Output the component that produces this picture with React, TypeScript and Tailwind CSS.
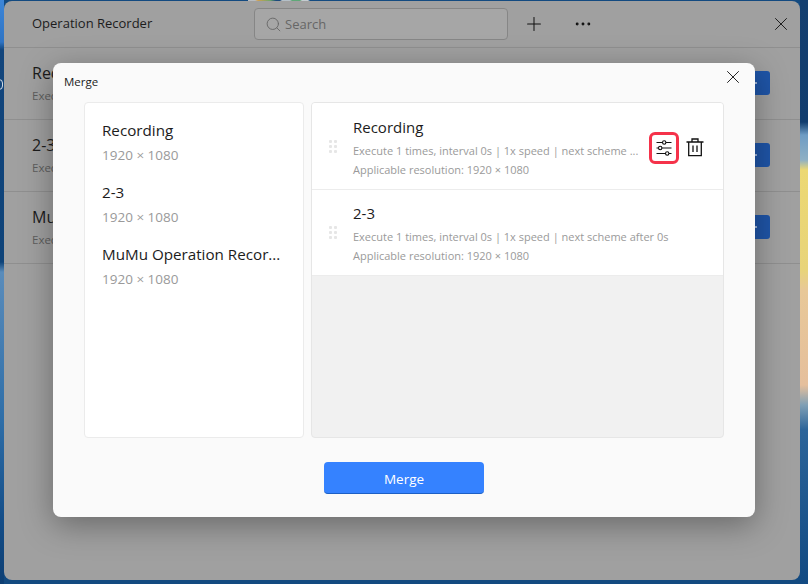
import { MoreHorizontal, Plus, Search, X } from 'lucide-react';

const schemes = [
  { name: 'Recording', top: 'Rec' },
  { name: '2-3', top: '2-3' },
  { name: 'MuMu Operation Recor...', top: 'Mu' }
];

const merged = [
  { name: 'Recording', line: 'Execute 1 times, interval 0s | 1x speed | next scheme ...', tools: true },
  { name: '2-3', line: 'Execute 1 times, interval 0s | 1x speed | next scheme after 0s', tools: false }
];

function Grip() {
  return (
    <div className="grid grid-cols-2 gap-[2px] w-[8px] shrink-0">
      {[0, 1, 2, 3, 4, 5].map((i) => (
        <span key={i} className="w-[3px] h-[3px] rounded-[1px] bg-[#e6e6e6]" />
      ))}
    </div>
  );
}

function SlidersIcon() {
  return (
    <svg width="18" height="18" viewBox="0 0 18 18" fill="none" stroke="#111111" strokeWidth="1.1">
      <path d="M1.5 3.5H7.5M11 3.5H16.5" />
      <circle cx="9.2" cy="3.5" r="1.7" />
      <path d="M1.5 9H3.5M7 9H16.5" />
      <circle cx="5.2" cy="9" r="1.7" />
      <path d="M1.5 14.5H10.5M14 14.5H16.5" />
      <circle cx="12.2" cy="14.5" r="1.7" />
    </svg>
  );
}

function TrashIcon() {
  return (
    <svg className="mb-[2px]" width="18" height="19" viewBox="0 0 18 19" fill="none" stroke="#111111" strokeWidth="1.3">
      <path d="M0.5 4H17.5" />
      <path d="M6 4V1H12V4" />
      <path d="M2.7 4V17.7H15.3V4" />
      <path d="M7 7.5V14M11 7.5V14" />
    </svg>
  );
}

export default function App() {
  return (
    <div className="relative w-[808px] h-[584px] overflow-hidden pl-[4px] pr-[8px] pt-[1px] pb-[4px] font-['Open_Sans',sans-serif] [background:linear-gradient(90deg,transparent_248px,#b8bcc0_248px,#b8bcc0_255px,#d0a050_258px,#6fa86a_270px,#1c4a7c_276px,#1c4a7c_280px,#b5c0c8_282px,#b5c0c8_290px,#5fa878_292px,#5fa878_300px,#c5ccd0_302px,#c5ccd0_308px,transparent_310px)_top/100%_1px_no-repeat,linear-gradient(180deg,#3d86d8_0px,#2f74c4_42px,#12457c_50px,#0e4379_262px,#5a8cbb_272px,#2e6ea8_420px,#134d88_520px,#0e3f73_584px)_left/4px_100%_no-repeat,linear-gradient(180deg,#143f70_0px,#113d6e_122px,#6e9cc4_135px,#8fb0c4_160px,#ecd873_170px,#e8d47a_270px,#e8c898_290px,#e5bf9c_385px,#7f9fb5_405px,#2c6499_430px,#124a82_584px)_right/8px_100%_no-repeat,#134a80]">
      {/* bit of a desktop icon label peeking out at the left edge */}
      <div className="absolute left-[-5px] top-[79px] w-[8px] h-[11px] rounded-full border border-white/80" />

      {/* dimmed window behind the dialog */}
      <div className="h-full rounded-[8px] bg-[#a0a0a0] overflow-hidden">
        <div className="flex items-center h-[47px] border-b border-[#8f8f8f]">
          <div className="w-[250px] pl-[28px] text-[13px] text-[#1c1c1c]">Operation Recorder</div>
          <div className="flex items-center gap-[3px] w-[254px] h-[32px] px-[10px] rounded-[4px] border border-[#868686] bg-[#a6a6a6] text-[13px] text-[#666666]">
            <Search className="w-[17px] h-[17px]" strokeWidth={1.3} />
            <span className="pt-[2px]">Search</span>
          </div>
          <Plus className="ml-[15px] w-[22px] h-[22px] text-[#111111]" strokeWidth={1.1} />
          <MoreHorizontal className="ml-[28px] w-[20px] h-[20px] text-[#111111]" strokeWidth={1.5} />
          <X className="ml-auto mr-[8px] w-[22px] h-[22px] text-[#111111]" strokeWidth={1} />
        </div>
        {schemes.map((s) => (
          <div key={s.name} className="flex items-center justify-between h-[72px] pb-[2px] pl-[28px] pr-[30px] border-b border-[#8f8f8f]">
            <div>
              <div className="text-[16px] leading-[22px] text-[#1c1c1c]">{s.top}</div>
              <div className="mt-[4px] text-[11.5px] leading-[16px] text-[#5e5e5e]">Exec</div>
            </div>
            <div className="flex items-center w-[60px] h-[24px] rounded-[3px] bg-[#1f55a8]">
              <span className="ml-[45px] w-[2px] h-[2px] bg-[#9fb6da]" />
            </div>
          </div>
        ))}
      </div>

      {/* merge dialog */}
      <div className="absolute left-[53px] top-[63px] w-[702px] h-[454px] rounded-[8px] bg-[#fafafa] shadow-[0_8px_32px_rgba(0,0,0,0.35)]">
        <div className="relative h-[39px] pl-[11px] pt-[10px] text-[11.5px] leading-[18px] text-[#1c1c1c]">
          Merge
          <X className="absolute right-[11px] top-[3px] w-[22px] h-[22px] text-[#111111]" strokeWidth={1} />
        </div>
        <div className="flex gap-[7px] pl-[31px]">
          <div className="w-[220px] h-[336px] pt-[7px] rounded-[4px] border border-[#ebebeb] bg-white">
            {schemes.map((s) => (
              <div key={s.name} className="h-[62px] pl-[17px] pt-[9px]">
                <div className="text-[15.2px] leading-[22px] text-[#1c1c1c] whitespace-nowrap">{s.name}</div>
                <div className="mt-[4px] text-[13.5px] leading-[20px] text-[#9a9a9a]">1920 × 1080</div>
              </div>
            ))}
          </div>
          <div className="w-[413px] h-[336px] rounded-[4px] border border-[#e6e6e6] bg-[#f1f1f1] overflow-hidden">
            {merged.map((m) => (
              <div
                key={m.name}
                className={`flex items-center pl-[17px] pr-[19px] bg-white border-b border-[#ececec] ${m.tools ? 'h-[87px]' : 'h-[86px]'}`}
              >
                <Grip />
                <div className="ml-[16px] flex-1 min-w-0">
                  <div className="mt-[2px] text-[15px] leading-[22px] text-[#1c1c1c]">{m.name}</div>
                  <div className="mt-[3px] text-[11px] leading-[19px] text-[#9a9a9a] whitespace-nowrap">{m.line}</div>
                  <div className="text-[11px] leading-[19px] text-[#9a9a9a]">Applicable resolution: 1920 × 1080</div>
                </div>
                {m.tools && (
                  <div className="mt-[4px] flex items-center gap-[7px]">
                    <div className="flex items-center justify-center w-[30px] h-[32px] rounded-[6px] border-[3px] border-[#f5324a]">
                      <SlidersIcon />
                    </div>
                    <TrashIcon />
                  </div>
                )}
              </div>
            ))}
          </div>
        </div>
        <div className="flex justify-center mt-[24px]">
          <button className="w-[160px] h-[32px] pt-[3px] rounded-[4px] bg-[#3582ff] border-b border-[#1c5fc4] text-[13.5px] text-white">Merge</button>
        </div>
      </div>
    </div>
  );
}
